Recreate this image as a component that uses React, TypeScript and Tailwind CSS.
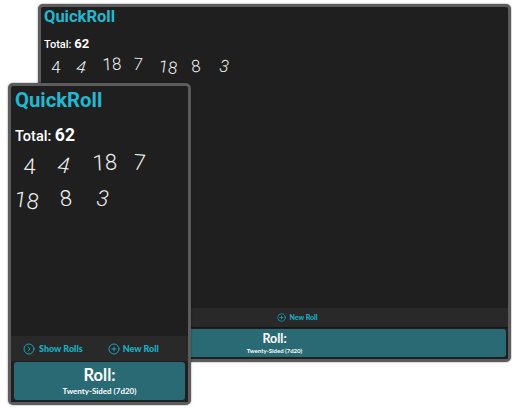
import React from 'react';
import { CircleChevronRight, CirclePlus } from 'lucide-react';

type Die = { value: number; className: string };

const backDice: Die[] = [
  { value: 4, className: 'rotate-[2deg] translate-y-[2px]' },
  { value: 4, className: 'rotate-[8deg] -translate-x-[4px] translate-y-[2px] italic' },
  { value: 18, className: '-rotate-[3deg] -translate-y-[1px]' },
  { value: 7, className: 'rotate-[4deg] -translate-x-[3px] -translate-y-[1px]' },
  { value: 18, className: 'rotate-[8deg] -translate-x-[1px] translate-y-[2px]' },
  { value: 8, className: '-rotate-[6deg] translate-y-[1px]' },
  { value: 3, className: 'rotate-[6deg] translate-y-[1px] italic' },
];

const frontDice: Die[] = [
  { value: 4, className: 'rotate-[2deg] translate-x-[2px] translate-y-[1px]' },
  { value: 4, className: 'rotate-[6deg] -translate-x-[2px] italic' },
  { value: 18, className: '-rotate-[3deg] translate-x-[2px] -translate-y-[3px]' },
  { value: 7, className: 'rotate-[4deg] -translate-x-[1px] -translate-y-[3px]' },
  { value: 18, className: 'rotate-[8deg] -translate-x-[1px] translate-y-[1px]' },
  { value: 8, className: '-rotate-[6deg] -translate-y-[1px]' },
  { value: 3, className: 'rotate-[6deg] -translate-y-[1px] italic' },
];

function BackWindow() {
  return (
    <section className="absolute left-[38px] top-[4px] flex h-[358px] w-[473px] flex-col rounded-[5px] border-[3px] border-[#5c5c5c] bg-[#1f1f1f] shadow-[0_0_2px_rgba(0,0,0,0.5)]">
      <div className="flex-1 pl-[3px]">
        <h1 className="font-['Roboto',sans-serif] text-[16.5px] leading-[20px] font-bold text-[#22b8d0]">QuickRoll</h1>
        <p className="mt-[9px] font-['Roboto',sans-serif] text-[11px] leading-[16px] font-medium text-white">
          Total: <span className="text-[13px] font-bold">62</span>
        </p>
        <div className="mt-[1px] -ml-[1px] flex">
          {backDice.map((d, i) => (
            <span key={i} className={`flex h-[24px] w-[28px] -translate-x-[1px] items-center justify-center font-['Roboto',sans-serif] text-[17px] font-light text-[#f2f2f2] ${d.className}`}>
              {d.value}
            </span>
          ))}
        </div>
      </div>
      <div className="flex h-[20px] items-center justify-center border-b border-[#161616] bg-[#292929] pl-[46px] font-['Lato',sans-serif] text-[7px] font-black text-[#1bb0c6]">
        <CirclePlus className="mr-[3px] h-[9px] w-[9px]" strokeWidth={1.8} />
        New Roll
      </div>
      <div className="flex-none bg-[#1f1f1f] p-[2px] pt-[1px]">
        <button className="flex h-[28px] w-full flex-col items-center justify-center rounded-[3px] bg-[#2a6a74] font-['Lato',sans-serif] font-bold text-white">
          <span className="text-[12.5px] leading-[14px]">Roll:</span>
          <span className="text-[6px] leading-[9px]">Twenty-Sided (7d20)</span>
        </button>
      </div>
    </section>
  );
}

function FrontWindow() {
  return (
    <section className="absolute left-[8px] top-[83px] flex h-[322px] w-[183px] flex-col rounded-[5px] border-[3px] border-[#5c5c5c] bg-[#1f1f1f] shadow-[0_0_2px_rgba(0,0,0,0.5)]">
      <div className="flex-1 pl-[4px]">
        <h1 className="mt-[1px] font-['Roboto',sans-serif] text-[20.3px] leading-[26px] font-bold text-[#22b8d0]">QuickRoll</h1>
        <p className="mt-[12px] font-['Roboto',sans-serif] text-[14.5px] leading-[20px] font-medium text-white">
          Total: <span className="text-[17.5px] font-bold">62</span>
        </p>
        <div className="mt-[1px] -ml-[6px] flex flex-wrap">
          {frontDice.map((d, i) => (
            <span key={i} className={`flex h-[34px] w-[37.5px] items-center justify-center font-['Roboto',sans-serif] text-[22px] font-light text-[#f2f2f2] ${d.className}`}>
              {d.value}
            </span>
          ))}
        </div>
      </div>
      <div className="flex h-[25px] items-center gap-[25px] bg-[#292929] pl-[12px] font-['Lato',sans-serif] text-[9px] font-black text-[#1bb0c6]">
        <span className="flex items-center gap-[4px]">
          <CircleChevronRight className="h-[12px] w-[12px]" strokeWidth={1.8} />
          Show Rolls
        </span>
        <span className="flex items-center gap-[3px]">
          <CirclePlus className="h-[12px] w-[12px]" strokeWidth={1.8} />
          New Roll
        </span>
      </div>
      <div className="flex-none bg-[#1f1f1f] px-[3px] pt-[1px] pb-[2px]">
        <button className="flex h-[38px] w-full flex-col items-center justify-center rounded-[3px] bg-[#2a6a74] font-['Lato',sans-serif] font-bold text-white">
          <span className="text-[16.5px] leading-[20px]">Roll:</span>
          <span className="text-[8px] leading-[12px]">Twenty-Sided (7d20)</span>
        </button>
      </div>
    </section>
  );
}

export default function App() {
  return (
    <main className="relative h-[409px] w-[512px] overflow-hidden bg-white">
      <BackWindow />
      <FrontWindow />
    </main>
  );
}
